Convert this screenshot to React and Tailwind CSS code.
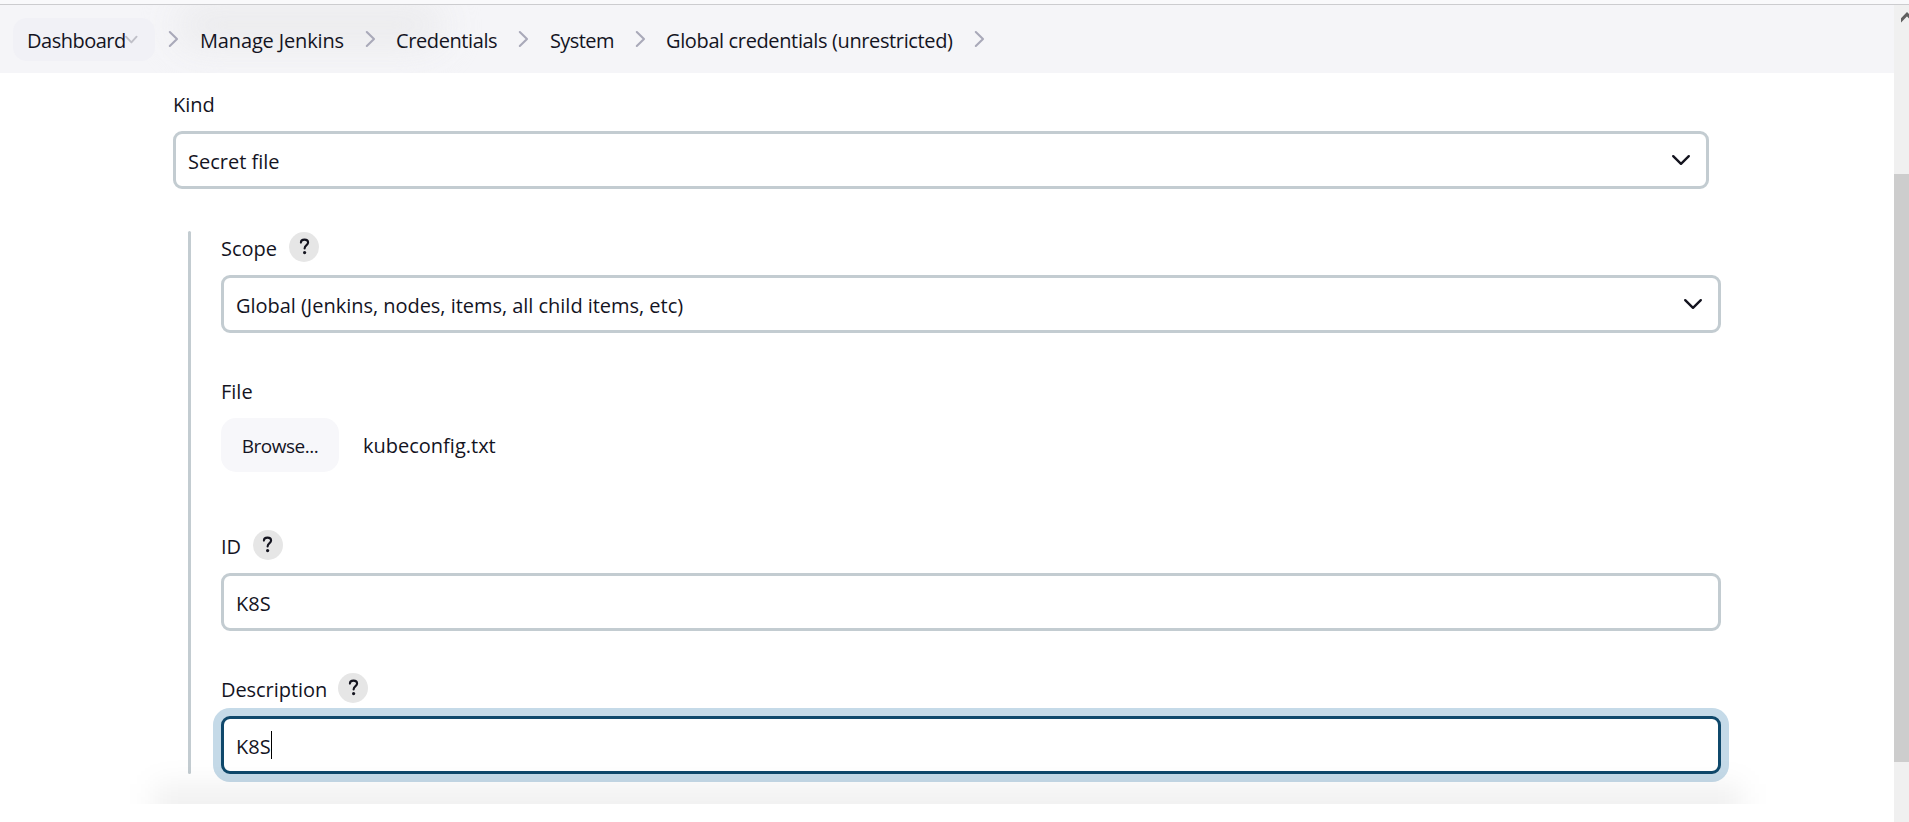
const CRUMBS = [
  { label: "Manage Jenkins", pad: "ml-[21px] mr-[20px]", width: "w-[145px]", tracking: "tracking-[-0.15px]" },
  { label: "Credentials", pad: "ml-[20px] mr-[20px]", width: "w-[102px]", tracking: "tracking-[-0.4px]" },
  { label: "System", pad: "ml-[21px] mr-[20px]", width: "w-[65px]", tracking: "tracking-[-0.6px]" },
  { label: "Global credentials (unrestricted)", pad: "ml-[20px] mr-[20px]", width: "w-[288px]", tracking: "tracking-[-0.37px]" },
];

function CrumbChevron() {
  return (
    <svg className="-mt-px block h-[18px] w-[11px] shrink-0" viewBox="0 0 11 18" fill="none" stroke="#a9a9b9" strokeWidth="2.1" strokeLinecap="round" strokeLinejoin="round">
      <path d="M1.8 2 L9 9 L1.8 16" />
    </svg>
  );
}

function SelectChevron() {
  return (
    <svg className="-mt-[1px] block h-3 w-5 shrink-0" viewBox="0 0 20 12" fill="none" stroke="#14141f" strokeWidth="2.4" strokeLinecap="round" strokeLinejoin="round">
      <path d="M2.2 2.2 L10 9.8 L17.8 2.2" />
    </svg>
  );
}

function Help() {
  return (
    <span className="flex size-[30px] shrink-0 items-center justify-center rounded-full bg-[#e6e6e6]">
      <svg className="-mt-px block h-[17px] w-[11px]" viewBox="0 0 11 17" fill="none">
        <path d="M1.9 4.6 C1.9 2.7 3.4 1.6 5.5 1.6 C7.6 1.6 9.1 2.8 9.1 4.6 C9.1 7.1 5.6 7.2 5.6 10.4" stroke="#14141f" strokeWidth="2.1" strokeLinecap="round" />
        <circle cx="5.6" cy="14.6" r="1.6" fill="#14141f" />
      </svg>
    </span>
  );
}

function Label({ children, help, className = "pt-[4px]" }) {
  return (
    <div className="flex h-[30px] items-center">
      <span className={className}>{children}</span>
      {help && <Help />}
    </div>
  );
}

function Field({ children, select, focused }) {
  return (
    <div
      className={`flex h-[58px] items-center justify-between rounded-[9px] border-[3px] bg-white pl-[12px] pr-[15px] ${
        focused ? "border-[#0f486b] shadow-[0_0_0_8px_#c5dae8]" : "border-[#c3ccd1]"
      }`}
    >
      <span className="flex items-center whitespace-nowrap pt-[4px]">{children}</span>
      {select && <SelectChevron />}
    </div>
  );
}

export default function App() {
  return (
    <div className="flex h-[822px] w-full flex-col overflow-hidden bg-white font-['Open_Sans','Noto_Sans',sans-serif] text-[20px] leading-7 text-[#14141f]">
      <div className="h-[5px] shrink-0 border-b border-[#cccccf] bg-[#f9f9fb]" />
      <div className="flex min-h-0 flex-1">
        <div className="relative flex min-w-0 flex-1 flex-col overflow-hidden">
          <header className="relative h-[68px] shrink-0 overflow-hidden bg-[#f5f5f8]">
            <div className="absolute left-[175px] top-[-4px] h-[48px] w-[270px] rounded-full bg-[#ebebed] opacity-90 blur-[18px]" />
            <nav className="relative flex h-[69px] items-center pl-[13px]">
              <div className="flex h-[43px] w-[142px] items-center rounded-[14px] bg-[#f1f1f6] pl-[14px]">
                <span className="w-[97px] pt-[3px] tracking-[-0.5px]">Dashboard</span>
                <svg className="block h-[10px] w-[14px] shrink-0" viewBox="0 0 14 10" fill="none" stroke="#c0c0c8" strokeWidth="1.9" strokeLinecap="round" strokeLinejoin="round">
                  <path d="M2 1.7 L7.4 7.4 L12.6 1.7" />
                </svg>
              </div>
              <div className="ml-[13px] flex items-center">
                <CrumbChevron />
                {CRUMBS.map((c) => (
                  <div key={c.label} className="flex items-center">
                    <span className={`whitespace-nowrap pt-[3px] ${c.pad} ${c.width} ${c.tracking}`}>{c.label}</span>
                    <CrumbChevron />
                  </div>
                ))}
              </div>
            </nav>
          </header>

          <main className="pl-[173px] pt-[16px]">
            <div className="w-[1536px]">
              <Label className="pt-[2px]">Kind</Label>
              <div className="mt-[12px]">
                <Field select>Secret file</Field>
              </div>
            </div>

            <section className="ml-[15px] mt-[42px] flex w-[1533px]">
              <div className="w-[3px] shrink-0 rounded-sm bg-[#c3ccd1]" />
              <div className="ml-[30px] flex-1 pt-px">
                <Label help className="mr-[12px] pt-[4px]">Scope</Label>
                <div className="mt-[13px]">
                  <Field select>
                    <span className="tracking-[-0.03px]">Global (Jenkins, nodes, items, all child items, etc)</span>
                  </Field>
                </div>

                <div className="mt-[42px]">
                  <Label>File</Label>
                  <div className="mt-[13px] flex items-center">
                    <span className="flex h-[54px] w-[118px] items-center justify-center rounded-[15px] bg-[#f7f7fa] pt-[2px] text-[19px] font-medium tracking-[-0.5px]">
                      Browse...
                    </span>
                    <span className="ml-[24px] pt-[2px]">kubeconfig.txt</span>
                  </div>
                </div>

                <div className="mt-[58px]">
                  <Label help className="mr-[11.5px] pt-[4px]">ID</Label>
                  <div className="mt-[13px]">
                    <Field>K8S</Field>
                  </div>
                </div>

                <div className="mt-[42px]">
                  <Label help className="mr-[11px] pt-[4px] tracking-[-0.06px]">Description</Label>
                  <div className="mt-[13px]">
                    <Field focused>
                      K8S
                      <span className="-mt-[4px] h-7 w-px bg-black" />
                    </Field>
                  </div>
                </div>
              </div>
            </section>
          </main>

          <div className="pointer-events-none absolute left-[100px] top-[735px] h-[64px] w-[1700px] overflow-hidden">
            <div className="ml-[54px] mt-[44px] h-[120px] w-[1588px] bg-black/[0.055] blur-[14px]" />
          </div>
        </div>

        <aside className="flex w-[15px] shrink-0 flex-col overflow-hidden bg-[#f0f0f0]">
          <div className="h-[169px] shrink-0 pl-[7px] pt-[7px]">
            <svg className="block h-[11px] w-[14px]" viewBox="0 0 14 11" fill="none" stroke="#606060" strokeWidth="3">
              <path d="M-1 9.5 L6 2.2 L13 9.5" />
            </svg>
          </div>
          <div className="h-[588px] shrink-0 bg-[#cdcdcd]" />
        </aside>
      </div>
    </div>
  );
}
